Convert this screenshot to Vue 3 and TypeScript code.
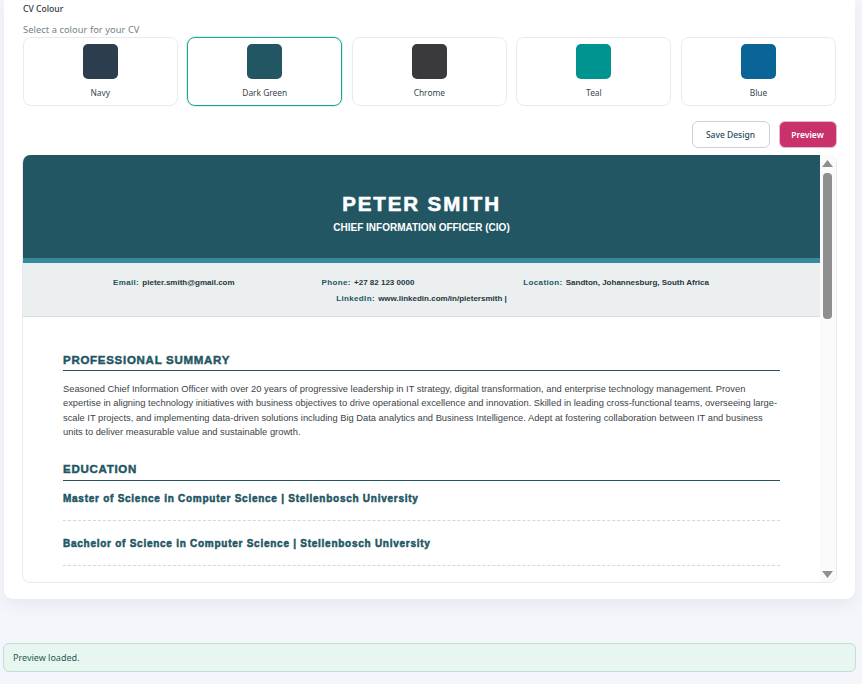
<script setup lang="ts">
const colours = [
  { name: 'Navy', hex: '#2c3e4d', active: false },
  { name: 'Dark Green', hex: '#235663', active: true },
  { name: 'Chrome', hex: '#3a3a3c', active: false },
  { name: 'Teal', hex: '#009490', active: false },
  { name: 'Blue', hex: '#0a6497', active: false },
]
const degrees = [
  'Master of Science in Computer Science | Stellenbosch University',
  'Bachelor of Science in Computer Science | Stellenbosch University',
]
</script>

<template>
  <div class="page">
    <main class="card">
      <div class="title">CV Colour</div>
      <div class="hint">Select a colour for your CV</div>
      <div class="swatches">
        <div v-for="c in colours" :key="c.name" class="option" :class="{ active: c.active }">
          <span class="chip" :style="{ background: c.hex }"></span>
          <span class="name">{{ c.name }}</span>
        </div>
      </div>
      <div class="actions">
        <button class="btn save">Save Design</button>
        <button class="btn preview">Preview</button>
      </div>
      <section class="frame">
        <div class="doc">
          <header class="head">
            <h1>PETER SMITH</h1>
            <p>CHIEF INFORMATION OFFICER (CIO)</p>
          </header>
          <div class="contact">
            <div class="row first">
              <span><b>Email:</b> pieter.smith@gmail.com</span>
              <span><b>Phone:</b> +27 82 123 0000</span>
              <span class="loc"><b>Location:</b> Sandton, Johannesburg, South Africa</span>
            </div>
            <div class="row">
              <span><b>LinkedIn:</b> www.linkedin.com/in/pietersmith |</span>
            </div>
          </div>
          <div class="body">
            <h2>PROFESSIONAL SUMMARY</h2>
            <p class="summary">Seasoned Chief Information Officer with over 20 years of progressive leadership in IT strategy, digital transformation, and enterprise technology management. Proven expertise in aligning technology initiatives with business objectives to drive operational excellence and innovation. Skilled in leading cross-functional teams, overseeing large-scale IT projects, and implementing data-driven solutions including Big Data analytics and Business Intelligence. Adept at fostering collaboration between IT and business units to deliver measurable value and sustainable growth.</p>
            <h2 class="second">EDUCATION</h2>
            <div v-for="d in degrees" :key="d" class="degree">{{ d }}</div>
          </div>
        </div>
        <aside class="bar">
          <svg class="arrow" width="11" height="7" viewBox="0 0 11 7"><path d="M5.5 0 11 7H0Z" fill="#8f8f8f" /></svg>
          <span class="thumb"></span>
          <span class="spacer"></span>
          <svg class="arrow" width="11" height="7" viewBox="0 0 11 7"><path d="M0 0H11L5.5 7Z" fill="#8f8f8f" /></svg>
        </aside>
      </section>
    </main>
    <div class="toast">Preview loaded.</div>
  </div>
</template>

<style>
html, body { background: #fff; }
</style>

<style scoped>
.page {
  height: 684px;
  box-sizing: border-box;
  background: #f4f6fb;
  padding: 0 6px 0 4px;
  font-family: "Noto Sans", "Open Sans", sans-serif;
  overflow: hidden;
}
.card {
  height: 599px;
  box-sizing: border-box;
  background: #fff;
  border-radius: 0 0 9px 9px;
  box-shadow: 0 6px 16px rgba(40, 60, 90, 0.07);
  padding: 3px 19px 0;
  margin-right: 1px;
}
.title { font-size: 8.6px; line-height: 13px; color: #2a3a44; font-weight: 500; }
.hint { margin-top: 7px; font-size: 9.3px; line-height: 14px; color: #737f86; letter-spacing: 0.06px; }
.swatches {
  display: grid;
  grid-template-columns: repeat(5, 1fr);
  gap: 9.5px;
  margin-left: -0.3px;
}
.option {
  height: 69px;
  box-sizing: border-box;
  border: 1px solid #e8ebee;
  border-radius: 8px;
  display: flex;
  flex-direction: column;
  align-items: center;
  padding-top: 6px;
  background: #fff;
}
.option.active {
  border-color: #22a294;
  box-shadow: 0 0 0 1px #d5f3ee;
}
.chip { width: 35px; height: 35px; border-radius: 5px; }
.name { margin-top: 7px; font-size: 8.4px; line-height: 13px; color: #3a444b; }
.actions {
  display: flex;
  justify-content: flex-end;
  gap: 9px;
  margin-top: 15px;
  margin-right: -0.5px;
}
.btn {
  height: 27px;
  box-sizing: border-box;
  border-radius: 6px;
  font-family: inherit;
  font-size: 8.5px;
  font-weight: 500;
  padding: 0;
}
.save { width: 78px; background: #fff; border: 1px solid #c9d3da; color: #1f4a5a; }
.preview { width: 58px; background: #c9316a; border: 1px solid #e3b7c8; color: #fff; font-weight: 600; }
.frame {
  margin: 7px -1px 0 -1px;
  height: 428px;
  box-sizing: border-box;
  border: 1px solid #e8ebee;
  border-top: 0;
  border-radius: 8px;
  display: flex;
  overflow: hidden;
  background: #fff;
}
.doc { width: 797px; flex: none; overflow: hidden; font-family: "Liberation Sans", Arial, sans-serif; }
.head {
  height: 108px;
  box-sizing: border-box;
  background: #235663;
  border-bottom: 5px solid #358a9e;
  color: #fff;
  text-align: center;
  padding-top: 37px;
}
.head h1 { margin: 0; font-size: 20.5px; line-height: 24px; letter-spacing: 1.9px; font-weight: 700; -webkit-text-stroke: 0.6px #fff; }
.head p { margin: 6px 0 0; font-size: 10px; line-height: 12px; font-weight: 700; }
.contact {
  height: 54px;
  box-sizing: border-box;
  background: #ebeff0;
  border-bottom: 1px solid #d8dcdd;
  padding-top: 14px;
  font-size: 8px;
  color: #26363d;
  font-weight: 700;
}
.row { display: flex; justify-content: center; line-height: 12px; height: 16px; }
.row.first { gap: 87px; padding-right: 21px; }
.row .loc { margin-left: 22px; }
.contact b { color: #235663; letter-spacing: 0.35px; margin-right: 1px; }
.body { padding: 36px 40px 0 40px; }
.body h2 {
  margin: 0;
  font-size: 11.5px;
  line-height: 14px;
  font-weight: 700;
  letter-spacing: 0.72px;
  color: #235663;
  -webkit-text-stroke: 0.45px #235663;
  padding-bottom: 3px;
  border-bottom: 1px solid #235663;
}
.body h2.second { margin-top: 22px; padding-bottom: 4px; }
.summary { margin: 10.5px 0 0; font-size: 9.33px; line-height: 14.6px; color: #3c4448; }
.degree {
  font-size: 10px;
  line-height: 14px;
  font-weight: 700;
  letter-spacing: 0.74px;
  color: #235663;
  -webkit-text-stroke: 0.5px #235663;
  padding: 11px 0 14px;
  border-bottom: 1px dashed #d4d6d8;
  margin-bottom: 5px;
}
.bar {
  flex: 1;
  background: #fafafa;
  display: flex;
  flex-direction: column;
  align-items: center;
  padding: 5px 1px 4px 0;
}
.arrow { flex: none; }
.thumb { width: 9px; height: 146px; margin-top: 6px; border-radius: 4px; background: #8f8f8f; flex: none; }
.spacer { flex: 1; }
.toast {
  margin-top: 44px;
  margin-left: -1px;
  height: 29px;
  box-sizing: border-box;
  border: 1px solid #bfe0d3;
  border-radius: 6px;
  background: #e7f6f0;
  color: #2b5a50;
  font-size: 9px;
  line-height: 27px;
  padding-left: 9px;
}
</style>
